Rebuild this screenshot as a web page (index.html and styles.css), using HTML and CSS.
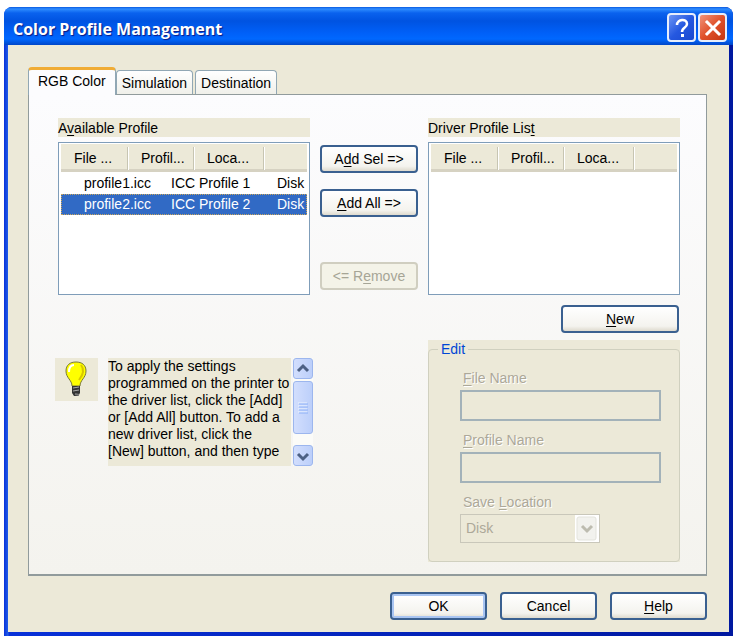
FILE: index.html
```html
<!DOCTYPE html>
<html lang="en">

<head>
    <meta charset="UTF-8">
    <meta name="viewport" content="width=device-width, initial-scale=1.0">
    <title>Color Profile Management</title>
    <link rel="stylesheet" href="styles.css">
</head>

<body>
    <div class="window">
        <header class="titlebar">
            <h1>Color Profile Management</h1>
            <button type="button" class="cap help" aria-label="Help">
                <svg viewBox="0 0 24 24" width="24" height="24"><path d="M7 9C7 3 17 2 17 8C17 12 12 11 12 16" fill="none" stroke="#fff" stroke-width="2.500"/><rect x="11" y="18" width="3" height="3" fill="#fff"/></svg>
            </button>
            <button type="button" class="cap close" aria-label="Close">
                <svg viewBox="0 0 24 24" width="24" height="24"><path d="M6 6L18 18M18 6L6 18" stroke="#fff" stroke-width="3" stroke-linecap="square"/></svg>
            </button>
        </header>

        <main class="content">
            <nav class="tabs" role="tablist">
                <button type="button" class="tab active" role="tab" aria-selected="true">RGB Color</button>
                <button type="button" class="tab" role="tab">Simulation</button>
                <button type="button" class="tab" role="tab">Destination</button>
            </nav>

            <section class="panel">
                <div class="col">
                    <div class="caption" id="available">A<u>v</u>ailable Profile</div>
                    <div class="list">
                        <table aria-labelledby="available">
                            <thead>
                                <tr><th>File ...</th><th>Profil...</th><th>Loca...</th><th></th></tr>
                            </thead>
                            <tbody>
                                <tr><td>profile1.icc</td><td>ICC Profile 1</td><td>Disk</td></tr>
                                <tr class="selected"><td>profile2.icc</td><td>ICC Profile 2</td><td>Disk</td></tr>
                            </tbody>
                        </table>
                    </div>
                </div>

                <div class="moves">
                    <button type="button" class="btn">A<u>d</u>d Sel =&gt;</button>
                    <button type="button" class="btn"><u>A</u>dd All =&gt;</button>
                    <button type="button" class="btn remove" disabled>&lt;= R<u>e</u>move</button>
                </div>

                <div class="col">
                    <div class="caption" id="driver">Driver Profile Lis<u>t</u></div>
                    <div class="list">
                        <table aria-labelledby="driver">
                            <thead>
                                <tr><th>File ...</th><th>Profil...</th><th>Loca...</th><th></th></tr>
                            </thead>
                        </table>
                    </div>
                </div>

                <div class="tip">
                    <div class="bulb">
                        <svg viewBox="0 0 43 43" width="43" height="43">
                            <path d="M17 28C17 22 11 20 11 13C11 7 15 4 21 4S31 7 31 13C31 20 25 22 25 28Z" fill="#ffff00" stroke="#77773a"/>
                            <path d="M14 14C14 9 16 7 19 7" fill="none" stroke="#fff" stroke-width="2"/>
                            <path d="M26 7C30 12 28 17 24 22" fill="none" stroke="#d9c800" stroke-width="2"/>
                            <path d="M17 28H25V35L23 38H19L17 35Z" fill="#333"/>
                            <path d="M18 30L24 29M18 33L24 32" stroke="#aaa"/>
                            <path d="M20 36L24 37" stroke="#777" stroke-width="2"/>
                        </svg>
                    </div>
                    <p class="tip-text">To apply the settings programmed on the printer to the driver list, click the [Add] or [Add All] button. To add a new driver list, click the [New] button, and then type</p>
                    <div class="scroll">
                        <button type="button" aria-label="Scroll up"><svg viewBox="0 0 18 18" width="18" height="18"><path d="M4 11L9 6L14 11" fill="none" stroke="#4d6185" stroke-width="3"/></svg></button>
                        <div class="thumb"><svg viewBox="0 0 10 12" width="10" height="12"><path d="M0 1H9M0 4H9M0 7H9M0 10H9" stroke="#eef4fe"/><path d="M1 2H10M1 5H10M1 8H10M1 11H10" stroke="#8cb0f8"/></svg></div>
                        <button type="button" class="down" aria-label="Scroll down"><svg viewBox="0 0 18 18" width="18" height="18"><path d="M4 7L9 12L14 7" fill="none" stroke="#4d6185" stroke-width="3"/></svg></button>
                    </div>
                </div>

                <div class="side">
                    <button type="button" class="btn new"><u>N</u>ew</button>
                    <div class="group">
                        <fieldset class="edit" disabled>
                            <legend>Edit</legend>
                            <label for="file"><u>F</u>ile Name</label>
                            <input type="text" id="file">
                            <label for="profile"><u>P</u>rofile Name</label>
                            <input type="text" id="profile">
                            <label for="location">Save <u>L</u>ocation</label>
                            <div class="combo">
                                <select id="location"><option>Disk</option></select>
                                <svg viewBox="0 0 24 27" width="24" height="27"><rect width="24" height="27" fill="#fff"/><rect x="2" y="2" width="19" height="23" rx="2" fill="#f2f2ee" stroke="#e3e3dc"/><path d="M7 11L12 16L17 11" fill="none" stroke="#bdbcb0" stroke-width="3"/></svg>
                            </div>
                        </fieldset>
                    </div>
                </div>
            </section>

            <footer class="actions">
                <button type="button" class="btn default">OK</button>
                <button type="button" class="btn">Cancel</button>
                <button type="button" class="btn"><u>H</u>elp</button>
            </footer>
        </main>
    </div>
</body>

</html>
```
FILE: styles.css
```css
* {
    box-sizing: border-box;
    margin: 0;
    padding: 0;
}

body {
    padding: 7px 1px 0 4px;
    background: #fff;
    color: #000;
    font: 14px/17px "Liberation Sans", Arial, sans-serif;
}

button,
input,
select {
    font: inherit;
    color: inherit;
}

u {
    text-underline-offset: 2px;
}

.window {
    display: flex;
    flex-direction: column;
    min-height: calc(100vh - 8px);
    border-radius: 8px 8px 0 0;
    background: linear-gradient(90deg, #0831d9, #1f5ce8 4px, #0831d9 5px, #0018a0);
}

.titlebar {
    display: flex;
    align-items: center;
    gap: 2px;
    height: 38px;
    padding: 3px 6px 0 9px;
    border-radius: 8px 8px 0 0;
    background: linear-gradient(#0a5ae0, #2e8cff 2px, #0a62ee 6px, #0053e1 14px, #0060f8 26px, #0068ff 32px, #0046c8);
}

.titlebar h1 {
    flex: 1;
    padding-top: 2px;
    color: #fff;
    font: bold 16px/24px "Open Sans", sans-serif;
    text-shadow: 1px 1px 1px #0a1883;
}

.cap {
    width: 29px;
    height: 29px;
    border: 2px solid #e6eefc;
    border-radius: 4px;
}

.cap svg,
.scroll svg {
    display: block;
    margin: auto;
}

.help {
    background: linear-gradient(135deg, #6c95f5, #2558e0 50%, #1a49cf);
}

.close {
    background: linear-gradient(135deg, #f0937a, #e0512b 50%, #c43510);
}

.content {
    flex: 1;
    margin: 0 4px 4px;
    padding: 22px 22px 12px 20px;
    background: #ece9d8;
}

/* tabs */
.tabs {
    display: flex;
    align-items: flex-end;
}

.tab {
    height: 24px;
    margin-right: 2px;
    padding: 2px 5px 0;
    border: 1px solid #91a7b4;
    border-bottom: none;
    border-radius: 4px 4px 0 0;
    background: linear-gradient(#fff, #f0f0ea);
}

.tab.active {
    position: relative;
    height: 28px;
    margin: 0 0 -1px;
    padding: 0 9px 2px;
    border-top: 3px solid #f0ac35;
    background: #fcfcfe;
}

.panel {
    display: grid;
    grid-template-columns: 1fr 98px 1fr;
    column-gap: 10px;
    padding: 23px 26px 12px 29px;
    border: 1px solid #919b9c;
    border-bottom-width: 2px;
    background: linear-gradient(#fcfcfe, #f4f3ee);
}

.caption {
    height: 19px;
    margin-bottom: 5px;
    padding-top: 2px;
    background: #ece9d8;
}

/* profile lists */
.list {
    height: 153px;
    padding: 1px 2px;
    overflow: hidden;
    border: 1px solid #7f9db9;
    background: #fff;
}

.list table,
.list thead,
.list tbody {
    display: block;
}

.list tr {
    display: grid;
    grid-template-columns: 87px 106px 1fr;
    height: 21px;
    padding-left: 23px;
    line-height: 21px;
}

.list thead tr {
    grid-template-columns: 67px 66px 70px 1fr;
    height: 28px;
    margin-bottom: 1px;
    padding: 3px 0;
    border-bottom: 3px solid #d6d2c2;
    background: #ece9d8;
}

.list th {
    padding-left: 13px;
    border-right: 1px solid #c7c5b2;
    box-shadow: 1px 0 #fff;
    font-weight: normal;
    line-height: 23px;
    text-align: left;
}

.list th:last-child {
    border: none;
    box-shadow: none;
}

.list td {
    overflow: hidden;
    white-space: nowrap;
}

.selected {
    outline: 1px dotted #c9a55c;
    outline-offset: -1px;
    background: #316ac5;
    color: #fff;
}

/* buttons */
.btn {
    height: 28px;
    border: 2px solid #3a6090;
    border-radius: 4px;
    background: linear-gradient(#fff, #f4f3ee 80%, #dedace);
}

.btn:disabled {
    border-color: #d0cec0;
    background: #f4f3e8;
    color: #a6a596;
}

.btn.default {
    box-shadow: inset 0 0 0 2px #a9c5f2;
}

.moves {
    display: flex;
    flex-direction: column;
    gap: 16px;
    padding-top: 27px;
}

.moves .remove {
    margin-top: 29px;
}

/* help text */
.tip {
    display: flex;
    grid-column: 1 / 3;
    align-items: flex-start;
    gap: 10px;
    margin: 63px 0 0 -3px;
}

.bulb {
    width: 43px;
    height: 43px;
    background: #ece9d8;
}

.tip-text {
    width: 183px;
    height: 108px;
    overflow: hidden;
    background: #ece9d8;
}

.scroll {
    display: flex;
    flex-direction: column;
    gap: 2px;
    width: 20px;
    height: 108px;
    margin-left: -8px;
    background: #fbfbf8;
}

.scroll button,
.thumb {
    height: 21px;
    border: 1px solid #9cb6ee;
    border-radius: 3px;
    background: linear-gradient(90deg, #d2defd, #bccffa);
}

.scroll .thumb {
    display: flex;
    align-items: center;
    height: 53px;
}

.scroll .down {
    margin-top: auto;
}

/* edit group */
.side {
    display: flex;
    flex-direction: column;
    padding-top: 10px;
}

.new {
    width: 118px;
    margin: 0 1px 7px 0;
    align-self: flex-end;
}

.group {
    background: #ece9d8;
}

.edit {
    display: flex;
    flex-direction: column;
    align-items: flex-start;
    padding: 11px 18px 18px 31px;
    border: 1px solid #d0d0bf;
    border-radius: 4px;
    color: #aca899;
}

.edit legend {
    margin-left: -22px;
    padding: 1px 3px 0;
    color: #0046d5;
}

.edit label {
    padding-left: 3px;
    line-height: 18px;
    text-shadow: 1px 1px #fff;
}

.edit input {
    width: 100%;
    height: 31px;
    margin: 3px 0 10px;
    padding: 0 6px;
    border: 2px solid #a3b2b9;
    background: #ece9d8;
}

.combo {
    position: relative;
    width: 140px;
    margin-top: 3px;
}

.combo select {
    display: block;
    width: 100%;
    height: 29px;
    padding-left: 5px;
    border: 1px solid #c9c7ba;
    background: #ece9d8;
    color: #aca899;
    opacity: 1;
    appearance: none;
}

.combo svg {
    position: absolute;
    top: 1px;
    right: 1px;
}

.actions {
    display: flex;
    justify-content: flex-end;
    gap: 13px;
    padding-top: 16px;
}

.actions .btn {
    width: 97px;
}
```
